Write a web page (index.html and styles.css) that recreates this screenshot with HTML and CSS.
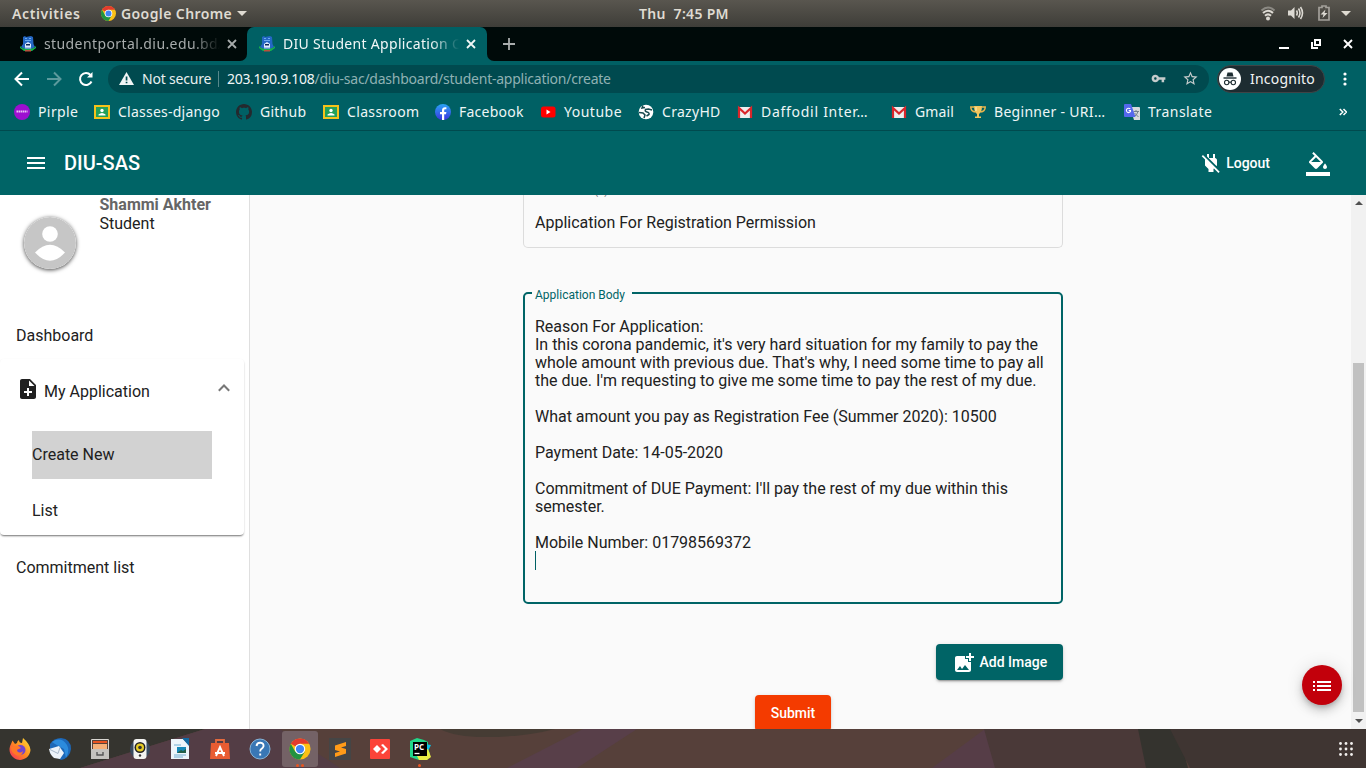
FILE: index.html
```html
<!DOCTYPE html>
<html lang="en">
<head>
<meta charset="utf-8">
<title>DIU Student Application Center</title>
<link rel="stylesheet" href="styles.css">
</head>
<body>
<div class="desktop">
  <header class="topbar">
    <span class="activities">Activities</span>
    <svg class="chrome-mini" viewBox="0 0 48 48"><circle cx="24" cy="24" r="24" fill="#fbc116"/><path d="M24 24 3.2 12A24 24 0 0 1 44.8 12H24z" fill="#e33b2e"/><path d="M3.2 12A24 24 0 0 0 24 48l10.4-18L24 24 13.6 30z" fill="#229342"/><circle cx="24" cy="24" r="12" fill="#fff"/><circle cx="24" cy="24" r="9.5" fill="#4285f4"/></svg>
    <span class="appname">Google Chrome</span>
    <i class="caret-down"></i>
    <span class="clock">Thu&nbsp; 7:45 PM</span>
    <div class="tray">
      <svg width="16" height="16" viewBox="0 0 16 16" fill="none" stroke="#dcd9d2"><path d="M1.500 5.500Q8-.5 14.500 5.500" stroke="#8b8983" stroke-width="2"/><path d="M3 8Q8 3.500 13 8M5 10.700Q8 8 11 10.700" stroke-width="2"/><circle cx="8" cy="13.500" r="2" fill="#dcd9d2" stroke="none"/></svg>
      <svg width="17" height="16" viewBox="0 0 17 16" fill="none" stroke="#dcd9d2" stroke-width="1.600"><path d="M1 5.500h3l3.500-3.500v12L4 10.500H1z" fill="#dcd9d2" stroke="none"/><path d="M9.500 5.500q1.500 2.500 0 5M11.500 3.500q3 4.500 0 9M13.500 2q4 6 0 12"/></svg>
      <svg class="battery" width="12" height="16" viewBox="0 0 12 16"><path d="M4 1h4v1.500h3v12.500H1V2.500h3z" fill="none" stroke="#a3a09a" stroke-width="1.700"/><path d="m7.500 4.500-5 5h3L4.500 13l5-5h-3z" fill="#dcd9d2"/></svg>
      <i class="caret-down"></i>
    </div>
  </header>

  <div class="tabstrip">
    <div class="tab">
      <svg class="favicon" viewBox="0 0 16 16"><path d="M3 1 5 0l1 1 5-1 2 1 .5 7 1.500 3-3 2H4l-3-2 2-3z" fill="#2467c4"/><path d="M5 2h2v1H5zM9 2h2v1H9zM5 4h6v1H5z" fill="#6aa9ee"/><path d="m5 8 3-2 3 2v3H5z" fill="#dcecff"/><path d="M6 8h4v1.500H6z" fill="#0b2558"/><path d="M0 10q2 3 8 3t8-3v2l-4 3H4l-4-3z" fill="#17b04c"/><path d="M5 11h6v1.500H5z" fill="#a8c6e8"/><path d="M5 14h6v1.500H5z" fill="#b8503c"/></svg>
      <span class="tab-title t-first">studentportal.diu.edu.bd/</span>
      <svg class="x" viewBox="0 0 10 10"><path d="m1 1 8 8M9 1 1 9"/></svg>
    </div>
    <div class="tab active">
      <svg class="favicon" viewBox="0 0 16 16"><path d="M3 1 5 0l1 1 5-1 2 1 .5 7 1.500 3-3 2H4l-3-2 2-3z" fill="#2467c4"/><path d="M5 2h2v1H5zM9 2h2v1H9zM5 4h6v1H5z" fill="#6aa9ee"/><path d="m5 8 3-2 3 2v3H5z" fill="#dcecff"/><path d="M6 8h4v1.500H6z" fill="#0b2558"/><path d="M0 10q2 3 8 3t8-3v2l-4 3H4l-4-3z" fill="#17b04c"/><path d="M5 11h6v1.500H5z" fill="#a8c6e8"/><path d="M5 14h6v1.500H5z" fill="#b8503c"/></svg>
      <span class="tab-title t-second">DIU Student Application Ce</span>
      <svg class="x" viewBox="0 0 10 10"><path d="m1 1 8 8M9 1 1 9"/></svg>
    </div>
    <div class="newtab-zone"><svg width="12" height="12" viewBox="0 0 12 12"><path d="M6 0v12M0 6h12" stroke="#a9adad" stroke-width="1.800"/></svg></div>
    <div class="winbtns">
      <svg width="10" height="10" viewBox="0 0 10 10"><path d="M0 9h10" stroke="#fff" stroke-width="2"/></svg>
      <svg width="10" height="10" viewBox="0 0 10 10" fill="none" stroke="#fff" stroke-width="2"><path d="M4 1h5v5H4zM1 3v6h6"/></svg>
      <svg width="10" height="10" viewBox="0 0 10 10"><path d="m1 1 8 8M9 1 1 9" stroke="#fff" stroke-width="1.900"/></svg>
    </div>
  </div>

  <div class="toolbar">
    <svg class="nav" viewBox="0 0 16 16"><path d="M15 8H2M8 1.500 1.500 8 8 14.500"/></svg>
    <svg class="nav dim" viewBox="0 0 16 16"><path d="M1 8h13M8 1.500 14.500 8 8 14.500"/></svg>
    <svg class="nav" viewBox="0 0 16 16"><path d="M13.500 10.500A6 6 0 1 1 12.500 4"/><path d="M14.500 1v5.500H9z" fill="#fff" stroke="none"/></svg>
    <div class="omnibox">
      <svg width="15" height="13" viewBox="0 0 15 13"><path d="M7.500 0 15 13H0z" fill="#f1f5f5"/><path d="M6.700 4.500h1.700v4H6.700zM6.700 9.700h1.700v1.600H6.700z" fill="#004a4f"/></svg>
      <span class="notsec">Not secure</span><i class="sep"></i>
      <span class="url"><b>203.190.9.108</b>/diu-sac/dashboard/student-application/create</span>
      <svg class="key" width="15" height="15" viewBox="0 0 24 24"><path d="M12.650 10C11.830 7.670 9.610 6 7 6c-3.310 0-6 2.690-6 6s2.690 6 6 6c2.610 0 4.830-1.670 5.650-4H17v4h4v-4h2v-4H12.650zM7 14c-1.100 0-2-.9-2-2s.9-2 2-2 2 .9 2 2-.9 2-2 2z" fill="#c5cccc"/></svg>
      <svg class="star" width="17" height="17" viewBox="0 0 24 24"><path d="m22 9.240-7.190-.62L12 2 9.190 8.630 2 9.240l5.460 4.730L5.820 21 12 17.270 18.180 21l-1.630-7.030L22 9.240zM12 15.400l-3.760 2.270 1-4.280-3.320-2.880 4.380-.38L12 6.100l1.710 4.040 4.380.38-3.320 2.880 1 4.280L12 15.400z" fill="#c5cccc"/></svg>
    </div>
    <div class="incog">
      <svg width="22" height="22" viewBox="0 0 22 22"><circle cx="11" cy="11" r="11" fill="#fff"/><path d="M7.500 8.500 8.500 4.500h5l1 4z" fill="#1d2c31"/><path d="M4.500 10h13" stroke="#1d2c31" stroke-width="1.400"/><g fill="none" stroke="#1d2c31" stroke-width="1.100"><circle cx="7.700" cy="14.500" r="2.200"/><circle cx="14.300" cy="14.500" r="2.200"/><path d="M9.900 14.200h2.200"/></g></svg>
      <span>Incognito</span>
    </div>
    <svg class="kebab" width="4" height="14" viewBox="0 0 4 14" fill="#fff"><circle cx="2" cy="2" r="1.600"/><circle cx="2" cy="7" r="1.600"/><circle cx="2" cy="12" r="1.600"/></svg>
  </div>

  <nav class="bookmarks">
    <a class="bm"><svg viewBox="0 0 16 16"><circle cx="8" cy="8" r="8" fill="#9d0fd0"/><path d="M2.500 7.500h11" stroke="#e9c3f5" stroke-width="2" stroke-dasharray="1.500 .5"/></svg><span class="b1">Pirple</span></a>
    <a class="bm"><svg viewBox="0 0 16 16"><path d="M0 1h16v14H0z" fill="#f7c21a"/><path d="M2 3h12v10H2z" fill="#23a05a"/><circle cx="8" cy="6.500" r="1.700" fill="#fff"/><path d="M4.500 11.500v-1q3.500-3 7 0v1z" fill="#fff"/></svg><span class="b2">Classes-django</span></a>
    <a class="bm"><svg viewBox="0 0 16 16"><path d="M8 0C3.580 0 0 3.580 0 8c0 3.540 2.290 6.530 5.470 7.590.4.070.55-.17.55-.38 0-.19-.01-.82-.01-1.490-2.010.37-2.530-.49-2.690-.94-.09-.23-.48-.94-.82-1.130-.28-.15-.68-.52-.01-.53.63-.01 1.080.58 1.230.82.72 1.210 1.870.87 2.330.66.07-.52.28-.87.51-1.070-1.780-.2-3.640-.89-3.640-3.950 0-.87.31-1.590.82-2.150-.08-.2-.36-1.020.08-2.120 0 0 .67-.21 2.200.82.64-.18 1.320-.27 2-.27s1.360.09 2 .27c1.530-1.040 2.200-.82 2.200-.82.44 1.100.16 1.920.08 2.120.51.56.82 1.270.82 2.150 0 3.070-1.870 3.750-3.650 3.950.29.25.54.73.54 1.480 0 1.070-.01 1.930-.01 2.200 0 .21.15.46.55.38A8.010 8.010 0 0 0 16 8c0-4.420-3.580-8-8-8z" fill="#24292e"/></svg><span class="b3">Github</span></a>
    <a class="bm"><svg viewBox="0 0 16 16"><path d="M0 1h16v14H0z" fill="#f7c21a"/><path d="M2 3h12v10H2z" fill="#23a05a"/><circle cx="8" cy="6.500" r="1.700" fill="#fff"/><path d="M4.500 11.500v-1q3.500-3 7 0v1z" fill="#fff"/></svg><span class="b4">Classroom</span></a>
    <a class="bm"><svg viewBox="0 0 16 16"><defs><linearGradient id="fb" x2="0" y2="1"><stop stop-color="#2aa4f4"/><stop offset="1" stop-color="#3b35e0"/></linearGradient></defs><circle cx="8" cy="8" r="8" fill="url(#fb)"/><path d="M7 16v-5.700H5V8h2V6.300C7 4.300 8.200 3.200 10 3.200h1.400v2h-1c-1 0-1.200.5-1.200 1.200V8h2.200l-.4 2.300H9.200V16z" fill="#fff"/></svg><span class="b5">Facebook</span></a>
    <a class="bm"><svg viewBox="0 0 16 16"><rect x="1" y="2.500" width="14.500" height="11" rx="2.500" fill="#f00"/><path d="m6.500 5.500 4 2.500-4 2.500z" fill="#fff"/></svg><span class="b6">Youtube</span></a>
    <a class="bm"><svg viewBox="0 0 16 16"><circle cx="8" cy="8" r="7.300" fill="#fff"/><path d="M5 1.500 4 4l3-.5M14 6l-3.500-1-3 .5Q6.500 7.500 9 8t2 2.500L8.500 12M1 8.500l4 .5 2 2-1 3" fill="none" stroke="#17494e" stroke-width="1.500"/></svg><span class="b7">CrazyHD</span></a>
    <a class="bm"><svg viewBox="0 0 16 16"><path d="M1 3h14v11H1z" fill="#eee"/><path d="M2 14V4l6 5.500L14 4v10" fill="none" stroke="#d9262b" stroke-width="2.200"/></svg><span class="b8">Daffodil Inter…</span></a>
    <a class="bm"><svg viewBox="0 0 16 16"><path d="M1 3h14v11H1z" fill="#eee"/><path d="M2 14V4l6 5.500L14 4v10" fill="none" stroke="#d9262b" stroke-width="2.200"/></svg><span class="b9">Gmail</span></a>
    <a class="bm"><svg viewBox="0 0 16 16"><path d="M4 3H.8q0 4.500 4.700 5M12 3h3.200q0 4.500-4.700 5" fill="none" stroke="#e9b54c" stroke-width="1.500"/><path d="M4 2h8q0 6-3 8v2.500h2V14H5v-1.500h2V10Q4 8 4 2z" fill="#f3c55d"/><path d="M6 3v4" stroke="#fff0ba"/></svg><span class="b10">Beginner - URI…</span></a>
    <a class="bm"><svg viewBox="0 0 16 16"><path d="M6 3h9q1 0 1 1v12h-6z" fill="#d7dadd"/><path d="M9.500 7.500H15M12 6v1.500M14 7.500q-1 4-4 5M10.500 9l4 4" stroke="#72808c" fill="none"/><path d="M1 0h6l4.500 13H1q-1 0-1-1V1q0-1 1-1z" fill="#5468ed"/><path d="M6.300 5A2.200 2.200 0 1 0 6.500 7.500V6.600H4.700" fill="none" stroke="#fff" stroke-width="1.100"/></svg><span class="b11">Translate</span></a>
    <svg class="more" width="8" height="8" viewBox="0 0 8 8"><path d="m.8 1 3 3-3 3M4.500 1l3 3-3 3" fill="none" stroke="#fff" stroke-width="1.500"/></svg>
  </nav>

  <div class="appbar">
    <svg class="mi" viewBox="0 0 24 24"><path d="M3 18h18v-2H3v2zm0-5h18v-2H3v2zm0-7v2h18V6H3z"/></svg>
    <h1>DIU-SAS</h1>
    <div class="logout"><svg class="mi" viewBox="0 0 24 24"><path d="M18 14.490V9c0-1-1.010-2.010-2-2V3h-2v4h-4V3H8v2.480l9.510 9.500.49-.49zm-1.760 1.770L7.200 7.200l-.01.01L3.980 4 2.710 5.250l3.360 3.360C6.040 8.740 6 8.870 6 9v5.480L9.500 18v3h5v-3l.48-.48L19.450 22l1.260-1.280-4.470-4.460z"/></svg><span>Logout</span></div>
    <svg class="mi fill-icon" viewBox="0 0 24 24"><path d="M16.560 8.940 7.620 0 6.210 1.410l2.380 2.380-5.150 5.150c-.59.59-.59 1.540 0 2.120l5.500 5.500c.29.29.68.44 1.060.44s.77-.15 1.060-.44l5.500-5.500c.59-.58.59-1.530 0-2.120zM5.210 10 10 5.210 14.790 10H5.210zM19 11.500s-2 2.170-2 3.500c0 1.100.9 2 2 2s2-.9 2-2c0-1.330-2-3.500-2-3.500zM0 20h24v4H0z"/></svg>
  </div>

  <div class="content">
    <aside class="sidebar">
      <div class="profile">
        <svg class="avatar" viewBox="0 0 52 52"><circle cx="26" cy="26" r="26" fill="#c6c6c6"/><circle cx="26" cy="17" r="7.800" fill="#fff"/><path d="M11 35.500q15-15.500 30 0-15 16.500-30 0z" fill="#fff"/></svg>
        <div class="who"><strong>Shammi Akhter</strong><span>Student</span></div>
      </div>
      <div class="side-item">Dashboard</div>
      <section class="panel">
        <div class="panel-head">
          <svg class="mi" viewBox="0 0 24 24"><path d="M14 2H6c-1.100 0-1.990.9-1.990 2L4 20c0 1.100.89 2 1.990 2H18c1.100 0 2-.9 2-2V8l-6-6zm2 14h-3v3h-2v-3H8v-2h3v-3h2v3h3v2zm-3-7V3.500L18.500 9H13z"/></svg>
          <span>My Application</span>
          <svg class="chev" width="12" height="8" viewBox="0 0 12 8"><path d="M.8 6.800 6 1.500l5.200 5.300"/></svg>
        </div>
        <div class="sub selected">Create New</div>
        <div class="sub">List</div>
      </section>
      <div class="side-item">Commitment list</div>
    </aside>
    <main class="main">
      <div class="form">
        <div class="subject"><label>Select Title(s)</label><span>Application For Registration Permission</span></div>
        <div class="body-field">
          <label>Application Body</label>
          <div class="text">Reason For Application:
In this corona pandemic, it's very hard situation for my family to pay the
whole amount with previous due. That's why, I need some time to pay all
the due. I'm requesting to give me some time to pay the rest of my due.

What amount you pay as Registration Fee (Summer 2020): 10500

Payment Date: 14-05-2020

Commitment of DUE Payment: I'll pay the rest of my due within this
semester.

Mobile Number: 01798569372
<i class="cursor"></i></div>
        </div>
        <button class="btn add"><svg class="mi" viewBox="0 0 24 24"><path d="M19 7v2.990s-1.990.01-2 0V7h-3s.01-1.990 0-2h3V2h2v3h3v2h-3zm-3 4V8h-3V5H5c-1.100 0-2 .9-2 2v12c0 1.100.9 2 2 2h12c1.100 0 2-.9 2-2v-8h-3zM5 19l3-4 2 3 3-4 4 5H5z"/></svg><span>Add Image</span></button>
        <button class="btn submit">Submit</button>
      </div>
      <button class="fab"><svg class="mi" viewBox="0 0 24 24"><path d="M3 13h2v-2H3v2zm0 4h2v-2H3v2zm0-8h2V7H3v2zm4 4h14v-2H7v2zm0 4h14v-2H7v2zM7 7v2h14V7H7z"/></svg></button>
    </main>
    <div class="scrollbar"><i class="up"></i><i class="thumb"></i><i class="down"></i></div>
  </div>

  <footer class="dock">
    <svg class="wallpaper" viewBox="0 0 1366 39"><path d="M0 0h1366v39H0z" fill="#56403a"/><path d="M0 0h205L80 39H0z" fill="#35342f"/><path d="M205 0h75l60 39H80z" fill="#533d45"/><path d="M440 0h115q-30 8-70 8-30 0-45-8z" fill="#463c34"/><path d="M583 0h54l-60 39h-70z" fill="#583f49"/><path d="M985 0h10v39h-63z" fill="#563d47"/><path d="M984 0h160l10 39H995z" fill="#4a3938"/><path d="M1138 0h40l10 39h-42z" fill="#34332e"/><path d="M1170 0h196v39h-176z" fill="#3f3532"/></svg>
    <span class="app"><svg viewBox="0 0 22 22"><defs><linearGradient id="ff" x1="1" x2="0" y2="1"><stop stop-color="#ffe536"/><stop offset=".5" stop-color="#ff8a20"/><stop offset="1" stop-color="#f5295f"/></linearGradient></defs><path d="M2 6 3.500 2.500 6 6l2-1q0-2 2-3 0 3 3 3l1-5q7 6 7.500 12A10.500 10.500 0 1 1 2 6z" fill="url(#ff)"/><circle cx="11.500" cy="12" r="5" fill="#7145cf"/><path d="M4 9q5-3 8 1l-2 1q-2 0-2 2 3 3 6 0-1 6-7 4-5-2-5-8z" fill="#ff7828"/></svg></span>
    <span class="app"><svg viewBox="0 0 22 22"><path d="M1 6Q5 0 12 0q10 1 10 11-1 9-10 11L1 15z" fill="#1d68b8"/><path d="M3 4q9-6 15 3 3 6-1 13l-2-9-9-5z" fill="#2c8bdd"/><path d="m0 11 10-3 5 7-4 6-6-1q-4-3-5-9z" fill="#edf3fa"/><path d="m1 11.500 8 4 2-6" fill="none" stroke="#a8b9cb"/></svg></span>
    <span class="app"><svg viewBox="0 0 22 22"><rect x="2" y="1" width="18" height="20" rx="1" fill="#d9d6d1"/><path d="M3 2h16v9H3z" fill="#58433a"/><path d="M4 3h14v2H4z" fill="#e95420"/><path d="M4 6h14v5H4z" fill="#f5b078"/><rect x="2" y="11" width="18" height="10" fill="#c4c2be"/><path d="M8 14v3h6v-3" fill="none" stroke="#555" stroke-width="1.400"/></svg></span>
    <span class="app"><svg viewBox="0 0 22 22"><circle cx="11" cy="11" r="10" fill="#394b60"/><rect x="4.500" y="1" width="13" height="20" rx="3" fill="#f3f3f0"/><circle cx="11" cy="9.500" r="5.500" fill="#222"/><circle cx="11" cy="9.500" r="4" fill="#e7cc25"/><circle cx="11" cy="9.500" r="1.800" fill="#333"/><circle cx="11" cy="17.500" r="1.200" fill="#333"/></svg></span>
    <span class="app"><svg viewBox="0 0 22 22"><path d="M2 1h12l6 6v14H2z" fill="#edf5fa"/><path d="M13 0h7v8z" fill="#126aa2"/><path d="M5 7h7M5 17h12M5 19h9" stroke="#72aed2"/><path d="M8 9h9v6H8z" fill="#1688b8"/><path d="m8 15 4-3 2 1 3-2v4z" fill="#236048"/></svg></span>
    <span class="app"><svg viewBox="0 0 22 22"><path d="M7 6V2h8v4" fill="none" stroke="#e56a3d" stroke-width="1.800"/><path d="M2 5h18l1 16H1z" fill="#e95c32"/><path d="m7 18 4-9 4 9M6 15h10" fill="none" stroke="#fff" stroke-width="1.900"/></svg></span>
    <span class="app help"><svg viewBox="0 0 22 22"><circle cx="11" cy="11" r="10" fill="#3977b5" stroke="#86b4d8"/><path d="M7.500 8q.5-3.500 4-3.200 3.500.4 3 3.500-.5 1.700-2 2.500-1.300.8-1.300 2.600M11.200 15.500v2" fill="none" stroke="#fff" stroke-width="1.900"/></svg></span>
    <span class="app running"><svg viewBox="0 0 48 48"><circle cx="24" cy="24" r="23" fill="#fbc116"/><path d="M24 24 4 12.500A23 23 0 0 1 44 12.500H24z" fill="#e33b2e"/><path d="M4 12.500A23 23 0 0 0 24 47l10.400-17L24 24 13.600 30z" fill="#229342"/><circle cx="24" cy="24" r="11.500" fill="#fff"/><circle cx="24" cy="24" r="9" fill="#4285f4"/></svg><i class="dots"></i></span>
    <span class="app"><svg viewBox="0 0 22 22"><path d="M0 0h22v22H0z" fill="#454545"/><path d="m17 4-11 3.500v4.500l5 1.500L6 15v4l11-3.500V11l-5-1.500L17 8z" fill="#ff9b18"/></svg></span>
    <span class="app"><svg viewBox="0 0 22 22"><rect x="1" y="1" width="20" height="20" rx="1" fill="#fb4439"/><path d="m8 7 4 4-4 4-4-4zM12 7l2-1 5 5-5 5-2-1 4-4z" fill="#fff"/></svg></span>
    <span class="app"><svg viewBox="0 0 22 22"><path d="m1 3 7-3 7 2 4 2v6l2 6-3 6-8 0-9-3z" fill="#21d789"/><path d="m16 6 6 1-3 6-5-1z" fill="#07c3e9"/><path d="m14 13 5-2 3 8-4 3h-8l-2-4z" fill="#e9ed45"/><path d="M4 4h14v14H4z" fill="#000"/><text x="5" y="11.500" class="pc">PC</text><path d="M5.500 15.500h5" stroke="#fff" stroke-width="1.300"/></svg><i class="dots one"></i></span>
    <svg class="grid" width="14" height="14" viewBox="0 0 14 14" fill="#f2f0ee"><circle cx="1.500" cy="1.500" r="1.400"/><circle cx="7" cy="1.500" r="1.400"/><circle cx="12.500" cy="1.500" r="1.400"/><circle cx="1.500" cy="7" r="1.400"/><circle cx="7" cy="7" r="1.400"/><circle cx="12.500" cy="7" r="1.400"/><circle cx="1.500" cy="12.500" r="1.400"/><circle cx="7" cy="12.500" r="1.400"/><circle cx="12.500" cy="12.500" r="1.400"/></svg>
  </footer>
</div>
</body>
</html>
```
FILE: styles.css
```css
* { box-sizing: border-box; }
body { margin: 0; font-family: "Noto Sans", "Open Sans", sans-serif; font-size: 14px; }
svg { display: block; flex: none; }
.desktop { width: 1366px; height: 768px; overflow: hidden; display: grid; grid-template-rows: 27px 34px 35px 34px 65px 534px 39px; }

/* Desktop panel */
.topbar { display: flex; align-items: center; position: relative; padding: 0 15px 1px 12px; background: linear-gradient(#59564f, #3e3d38); color: #dfdbd2; font-weight: 600; font-size: 14px; white-space: nowrap; }
.activities { width: 89px; letter-spacing: .6px; }
.chrome-mini { width: 15px; height: 15px; }
.appname { width: 110px; margin-left: 5px; letter-spacing: .4px; }
.caret-down { width: 0; height: 0; margin-left: 6px; border: 5px solid transparent; border-top-color: #dfdbd2; border-bottom: 0; }
.clock { position: absolute; left: 639px; letter-spacing: .3px; }
.tray { margin-left: auto; display: flex; align-items: center; gap: 11px; }
.tray .battery { margin-left: 3px; }
.tray .caret-down { margin-left: 0; }

/* Browser tabs */
.tabstrip { display: flex; background: linear-gradient(#000a09 50%, #006064 50%); color: #a7acac; white-space: nowrap; }
.tab { width: 247px; display: flex; align-items: center; padding: 0 10px 1px 20px; background: #000a09; border-bottom-right-radius: 7px; }
.tab.active { width: 240px; padding: 0 11px 1px 12px; background: #006064; color: #f1f7f7; border-radius: 7px 7px 0 0; }
.favicon { width: 16px; height: 16px; }
.tab-title { width: 176px; margin-left: 8px; overflow: hidden; mask-image: linear-gradient(90deg, #000 84%, transparent); }
.t-first { letter-spacing: .4px; }
.t-second { letter-spacing: .31px; }
.x { width: 10px; height: 10px; margin-left: auto; stroke: currentColor; stroke-width: 1.8; }
.newtab-zone { flex: 1; display: flex; align-items: center; padding-left: 16px; background: #000a09; border-bottom-left-radius: 7px; }
.winbtns { display: flex; align-items: center; gap: 22px; padding-right: 13px; background: #000a09; }

/* Browser toolbar */
.toolbar { display: flex; align-items: center; padding: 0 19px 0 14px; background: #006064; }
.nav { width: 16px; height: 16px; margin-right: 16px; fill: none; stroke: #fff; stroke-width: 2; }
.nav.dim { stroke: #5c9a9d; }
.omnibox { width: 1101px; height: 28px; margin-left: -2px; padding: 0 10px 0 11px; border-radius: 14px; display: flex; align-items: center; background: #004a4f; color: #8fb1b3; white-space: nowrap; }
.notsec { width: 69px; margin-left: 8px; color: #e9f0f0; letter-spacing: -.2px; }
.sep { width: 1px; height: 16px; margin: 0 8px 0 7px; background: #56888b; }
.url { letter-spacing: -.24px; }
.url b { font-weight: 400; color: #f0f6f6; letter-spacing: -.3px; }
.key { margin-left: auto; }
.star { margin-left: 16px; }
.incog { width: 108px; height: 28px; margin-left: 8px; display: flex; align-items: center; gap: 9px; padding-left: 1px; border: 1px solid #3f4446; border-radius: 14px; background: #1d2c31; color: #f2f4f4; letter-spacing: .22px; }
.kebab { margin-left: auto; }

/* Bookmarks */
.bookmarks { display: flex; align-items: center; gap: 16px; padding: 0 0 2px 14px; background: #006064; color: #eef6f6; white-space: nowrap; }
.bm { display: flex; align-items: center; gap: 8px; }
.bm svg { width: 16px; height: 16px; }
.bm span { margin-top: -1px; }
.b1 { width: 40px; letter-spacing: .4px; }
.b2 { width: 102px; letter-spacing: .24px; }
.b3 { width: 47px; letter-spacing: .25px; }
.b4 { width: 72px; letter-spacing: .35px; }
.b5 { width: 65px; letter-spacing: .25px; }
.b6 { width: 58px; letter-spacing: .5px; }
.b7 { width: 59px; letter-spacing: .3px; }
.b8 { width: 114px; letter-spacing: .72px; }
.b9 { width: 39px; letter-spacing: .15px; }
.b10 { width: 114px; letter-spacing: .3px; }
.b11 { width: 64px; letter-spacing: .45px; }
.more { margin-left: auto; margin-right: 19px; }

/* Application header */
.appbar { display: flex; align-items: center; padding: 0 36px 0 24px; border-top: 1px solid #004a4e; background: #006466; color: #fff; font-family: Roboto, sans-serif; }
.mi { width: 24px; height: 24px; fill: currentColor; }
.appbar h1 { margin: 0 auto 0 16px; font-size: 20px; font-weight: 500; line-height: 24px; }
.logout { display: flex; align-items: center; gap: 3px; margin-right: 36px; font-size: 14px; font-weight: 500; }
.fill-icon { margin-top: 2px; }

.content { display: flex; overflow: hidden; font-family: Roboto, sans-serif; font-size: 16px; color: #212121; }

/* Side navigation */
.sidebar { width: 250px; border-right: 1px solid #dfdfdf; background: #fff; }
.profile { height: 117px; display: flex; padding: 0 24px; gap: 23.5px; }
.avatar { width: 52px; height: 52px; margin-top: 22px; border-radius: 50%; box-shadow: 0 1px 4px rgba(0,0,0,.75); }
.who { display: flex; flex-direction: column; line-height: 19px; }
.who strong { color: #666; }
.side-item { height: 48px; padding-left: 16px; line-height: 48px; }
.panel { width: 244px; height: 176px; margin: -1px 0 9px; border-radius: 4px; box-shadow: 0 2px 2px -1px rgba(0,0,0,.45), 0 1px 2px rgba(0,0,0,.16); }
.panel-head { height: 64px; display: flex; align-items: center; padding: 0 14px 0 16px; }
.panel-head .mi { margin-top: -4px; margin-right: 4px; }
.chev { margin-left: auto; margin-top: -6px; fill: none; stroke: #777; stroke-width: 2; }
.sub { width: 180px; height: 48px; margin: 8px 0 0 32px; line-height: 47px; }
.selected { background: #d2d2d2; }

/* Form */
.main { position: relative; flex: 1; background: #fafafa; }
.form { width: 540px; margin-left: 273px; display: flex; flex-direction: column; }
.subject { height: 53px; padding-left: 11px; border: 1px solid #dcdcdc; border-top: 0; border-radius: 0 0 5px 5px; display: flex; flex-direction: column; }
.subject label { height: 18px; margin-top: -14px; font-size: 12px; line-height: 18px; color: #757575; }
.subject span { margin-top: 14px; line-height: 19px; letter-spacing: -.01px; }
.body-field { height: 312px; margin-top: 44px; border: 2px solid #006466; border-radius: 5px; }
.body-field label { display: block; width: 100px; height: 14px; margin: -6px 0 0 7px; padding-left: 3px; background: #fafafa; color: #006466; font-size: 12px; line-height: 14px; }
.text { margin: 16px 0 0 10px; line-height: 18px; white-space: pre; letter-spacing: -.01px; }
.cursor { display: inline-block; width: 1px; height: 19px; margin-top: -1px; background: #006064; vertical-align: top; }
.btn { height: 36px; padding: 0; border: 0; border-radius: 4px; color: #fff; font: 500 14px Roboto, sans-serif; box-shadow: 0 3px 1px -2px rgba(0,0,0,.2), 0 2px 2px rgba(0,0,0,.14), 0 1px 5px rgba(0,0,0,.12); }
.add { width: 127px; margin: 40px 0 0 auto; display: flex; align-items: center; gap: 3.5px; padding-left: 16px; background: #006466; }
.add .mi { margin-top: 2px; }
.submit { width: 76px; margin: 15px auto 0; background: #f43b00; }
.fab { position: absolute; right: 9px; top: 470px; width: 40px; height: 40px; padding: 1px 0 0 8px; border: 0; border-radius: 50%; background: #c2000b; color: #fff; box-shadow: 0 3px 5px -1px rgba(0,0,0,.2), 0 6px 10px rgba(0,0,0,.14), 0 1px 18px rgba(0,0,0,.12); }
.scrollbar { width: 15px; display: flex; flex-direction: column; align-items: center; background: #f1f1f1; }
.up, .down { width: 0; height: 0; border: 4px solid transparent; }
.up { margin-top: 6px; border-top: 0; border-bottom-color: #505050; }
.thumb { width: 11px; height: 349px; margin-top: 158px; background: #c1c1c1; }
.down { margin-top: 7px; border-bottom: 0; border-top-color: #505050; }

/* Launcher */
.dock { position: relative; display: flex; align-items: center; padding: 0 13px 0 2px; background: #56403a; }
.wallpaper { position: absolute; left: 0; top: 0; width: 1366px; height: 39px; }
.app { position: relative; width: 36px; height: 36px; margin-right: 4px; display: flex; align-items: center; justify-content: center; border-radius: 3px; }
.app svg { width: 22px; height: 22px; }
.running { background: #746266; }
.dots { position: absolute; bottom: 0; left: 14px; width: 3px; height: 3px; border-radius: 50%; background: #e95420; box-shadow: 5px 0 #e95420; }
.dots.one { left: 16px; box-shadow: none; }
.pc { font: 700 8px "Open Sans", sans-serif; fill: #fff; }
.grid { position: relative; margin-left: auto; }
```
